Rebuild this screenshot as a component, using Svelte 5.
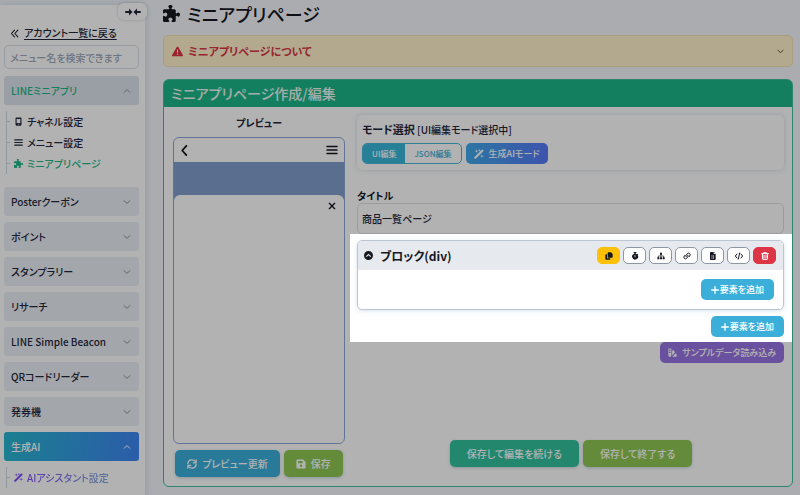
<script>
  let title = $state("商品一覧ページ");
  let keyword = $state("");
  let mode = $state("ui");

  let groups = $state([
    {
      label: "LINEミニアプリ",
      theme: "current",
      open: true,
      items: [
        { label: "チャネル設定", icon: "mobile" },
        { label: "メニュー設定", icon: "bars" },
        { label: "ミニアプリページ", icon: "puzzle", theme: "active" },
      ],
    },
    { label: "Posterクーポン" },
    { label: "ポイント" },
    { label: "スタンプラリー" },
    { label: "リサーチ" },
    { label: "LINE Simple Beacon" },
    { label: "QRコードリーダー" },
    { label: "発券機" },
    {
      label: "生成AI",
      theme: "ai",
      open: true,
      items: [{ label: "AIアシスタント設定", icon: "wand", theme: "ai-item" }],
    },
  ]);

  const tools = [
    { icon: "copy", label: "複製", theme: "warning" },
    { icon: "stopwatch", label: "タイマー" },
    { icon: "sitemap", label: "階層" },
    { icon: "link", label: "リンク" },
    { icon: "file", label: "ファイル" },
    { icon: "code", label: "コード" },
    { icon: "trash", label: "削除", theme: "danger" },
  ];

  // "line" is drawn as a stroke, "fill" as a solid shape
  const icons = {
    puzzle: {
      box: 512,
      fill: "M192 104.800c0-9.200-5.800-17.300-13.200-22.800C167.200 73.300 160 61.300 160 48c0-26.500 28.700-48 64-48s64 21.500 64 48c0 13.300-7.200 25.300-18.800 34c-7.400 5.500-13.200 13.600-13.200 22.800c0 12.800 10.400 23.200 23.200 23.200H336c26.500 0 48 21.500 48 48v56.800c0 12.800 10.400 23.200 23.200 23.200c9.200 0 17.300-5.800 22.800-13.200c8.700-11.600 20.700-18.800 34-18.800c26.500 0 48 28.700 48 64s-21.500 64-48 64c-13.300 0-25.300-7.200-34-18.800c-5.500-7.400-13.600-13.200-22.800-13.200c-12.800 0-23.200 10.400-23.200 23.200V464c0 26.500-21.500 48-48 48H279.200c-12.800 0-23.200-10.400-23.200-23.200c0-9.200 5.800-17.300 13.200-22.800c11.600-8.700 18.800-20.700 18.800-34c0-26.500-28.700-48-64-48s-64 21.500-64 48c0 13.300 7.200 25.300 18.800 34c7.400 5.500 13.200 13.600 13.200 22.800c0 12.800-10.400 23.200-23.200 23.200H48c-26.500 0-48-21.500-48-48V343.200C0 330.400 10.400 320 23.200 320c9.200 0 17.300 5.800 22.800 13.200C54.700 344.800 66.700 352 80 352c26.500 0 48-28.700 48-64s-21.500-64-48-64c-13.300 0-25.300 7.200-34 18.800C40.500 250.200 32.400 256 23.200 256C10.400 256 0 245.600 0 232.800V176c0-26.500 21.500-48 48-48H168.800c12.800 0 23.200-10.400 23.200-23.200z",
    },
    warning: {
      box: 512,
      fill: "M256 32c14.200 0 27.300 7.500 34.500 19.800l216 368c7.300 12.400 7.300 27.700 .2 40.100S486.300 480 472 480H40c-14.300 0-27.600-7.700-34.700-20.100s-7-27.800 .2-40.100l216-368C228.700 39.500 241.800 32 256 32zm0 128c-13.300 0-24 10.700-24 24V296c0 13.300 10.700 24 24 24s24-10.700 24-24V184c0-13.300-10.700-24-24-24zm32 224a32 32 0 1 0 -64 0 32 32 0 1 0 64 0z",
    },
    mobile: { box: 24, fill: "M7 1h10a3 3 0 0 1 3 3v16a3 3 0 0 1-3 3H7a3 3 0 0 1-3-3V4a3 3 0 0 1 3-3zm0 4v11h10V5zm3 13v2h4v-2z" },
    bars: { box: 24, line: "M2 5h20M2 12h20M2 19h20", width: 3 },
    wand: {
      box: 24,
      line: "M3 21L20 4",
      width: 5,
      fill: "M6 0l1 4 4 1-4 1-1 4-1-4-4-1 4-1zM13 0l1 2 2 1-2 1-1 2-1-2-2-1 2-1zM19 12l1 4 4 1-4 1-1 4-1-4-4-1 4-1z",
    },
    back: { box: 24, line: "M12 3l-8 9 8 9M21 3l-8 9 8 9", width: 3 },
    collapse: { box: 32, line: "M2 16h8M30 16h-8", width: 4, fill: "M8 9l7 7-7 7zM24 9l-7 7 7 7z" },
    down: { box: 24, line: "M3 8l9 8 9-8", width: 3 },
    up: { box: 24, line: "M3 16l9-8 9 8", width: 3 },
    left: { box: 24, line: "M16 2L7 12l9 10", width: 4 },
    close: { box: 24, line: "M4 4l16 16M20 4L4 20", width: 4 },
    plus: { box: 24, line: "M12 2v20M2 12h20", width: 4 },
    circleUp: { box: 24, fill: "M12 0a12 12 0 1 1 0 24a12 12 0 0 1 0-24zM5 14l2 2 5-5 5 5 2-2-7-7z" },
    copy: { box: 24, fill: "M10 1h8l5 5v9a2 2 0 0 1-2 2H10a2 2 0 0 1-2-2V3a2 2 0 0 1 2-2zM3 7h3v10a2 2 0 0 0 2 2h8v2a2 2 0 0 1-2 2H3a2 2 0 0 1-2-2V9a2 2 0 0 1 2-2z" },
    stopwatch: { box: 24, fill: "M8 0h8v3h-2v2a9 9 0 0 1 4 2l2-2 2 2-2 2a9 9 0 1 1-10-4V3H8zM11 9v7h2V9z" },
    sitemap: {
      box: 24,
      line: "M12 7v10M4 17v-5h16v5",
      width: 2,
      fill: "M9 2h6v6H9zM1 16h6v6H1zM9 16h6v6H9zM17 16h6v6h-6z",
    },
    link: { box: 24, line: "M10 15a5 5 0 0 1 0-7l3-3a5 5 0 0 1 7 0a5 5 0 0 1 0 7l-2 2M14 9a5 5 0 0 1 0 7l-3 3a5 5 0 0 1-7 0a5 5 0 0 1 0-7l2-2", width: 3 },
    file: { box: 24, fill: "M5 0h9v6h6v16a2 2 0 0 1-2 2H5a2 2 0 0 1-2-2V2a2 2 0 0 1 2-2zM16 0l4 4h-4zM8 10v4h2v-4zM13 10v4h2v-4zM8 16v4h2v-4zM13 16v4h2v-4z" },
    code: { box: 24, line: "M6 6l-5 6 5 6M18 6l5 6-5 6M14 3l-4 18", width: 3 },
    trash: { box: 24, line: "M2 5h20M8 5V2h8v3M4 5l1 17h14l1-17M9 10v8M15 10v8", width: 3 },
    refresh: { box: 24, line: "M2 11a10 10 0 0 1 18-5l2 2M22 2v7h-7M22 13a10 10 0 0 1-18 5l-2-2M2 22v-7h7", width: 3 },
    save: { box: 24, fill: "M4 1h13l6 6v13a3 3 0 0 1-3 3H4a3 3 0 0 1-3-3V4a3 3 0 0 1 3-3zM5 5v5h11V5zM12 13a3 3 0 1 0 0 6a3 3 0 0 0 0-6z" },
    swatch: { box: 24, fill: "M1 1h8v18a4 4 0 0 1-8 0zM3 4v3h4V4zM3 10v3h4v-3zM11 7l3-2 5 6-8 9zM19 15h4v8H12z" },
  };
</script>

{#snippet icon(name, size = 10)}
  {@const shape = icons[name]}
  <svg
    class="icon"
    width={size}
    height={size}
    viewBox="0 0 {shape.box} {shape.box}"
    aria-hidden="true">
    {#if shape.fill}
      <path d={shape.fill} fill="currentColor" fill-rule="evenodd" />
    {/if}
    {#if shape.line}
      <path
        d={shape.line}
        fill="none"
        stroke="currentColor"
        stroke-width={shape.width}
        stroke-linecap="round"
        stroke-linejoin="round" />
    {/if}
  </svg>
{/snippet}

<div class="page">
  <aside class="sidebar">
    <button class="sidebar__toggle" aria-label="メニューを閉じる">
      {@render icon("collapse", 16)}
    </button>
    <a class="sidebar__back" href="#/accounts">
      {@render icon("back", 9)}
      <span>アカウント一覧に戻る</span>
    </a>
    <input
      class="sidebar__search"
      type="text"
      aria-label="メニュー検索"
      placeholder="メニュー名を検索できます"
      bind:value={keyword} />

    <nav class="menu">
      {#each groups as group}
        <div>
          <button
            class="menu__head {group.theme ?? ''}"
            aria-expanded={!!group.open}
            onclick={() => (group.open = !group.open)}>
            {group.label}
            {@render icon(group.open ? "up" : "down", 8)}
          </button>
          {#if group.open && group.items}
            <ul class="menu__list">
              {#each group.items as item}
                <li>
                  <a class="menu__link {item.theme ?? ''}" href="#/menu">
                    {@render icon(item.icon, 9)}
                    <span>{item.label}</span>
                  </a>
                </li>
              {/each}
            </ul>
          {/if}
        </div>
      {/each}
    </nav>
  </aside>

  <main class="main">
    <h1>
      {@render icon("puzzle", 17)}
      ミニアプリページ
    </h1>

    <button class="notice" aria-expanded="false">
      {@render icon("warning", 11)}
      <span>ミニアプリページについて</span>
      {@render icon("down", 7)}
    </button>

    <section class="panel">
      <h2>ミニアプリページ作成/編集</h2>
      <div class="panel__body">
        <div class="preview">
          <h3>プレビュー</h3>
          <div class="phone">
            <div class="phone__bar">
              {@render icon("left", 11)}
              {@render icon("bars", 12)}
            </div>
            <div class="phone__view">
              <div class="phone__sheet">
                {@render icon("close", 8)}
              </div>
            </div>
          </div>
          <div class="actions preview__actions">
            <button class="btn btn--large info">
              {@render icon("refresh")}
              プレビュー更新
            </button>
            <button class="btn btn--large lime">
              {@render icon("save")}
              保存
            </button>
          </div>
        </div>

        <form class="editor" onsubmit={(e) => e.preventDefault()}>
          <div class="mode">
            <p><strong>モード選択</strong> [UI編集モード選択中]</p>
            <div class="actions">
              <div class="switch">
                <button type="button" class:on={mode === "ui"} onclick={() => (mode = "ui")}>
                  UI編集
                </button>
                <button type="button" class:on={mode === "json"} onclick={() => (mode = "json")}>
                  JSON編集
                </button>
              </div>
              <button type="button" class="btn gradient">
                {@render icon("wand")}
                生成AIモード
              </button>
            </div>
          </div>

          <div class="field">
            <label for="page-title">タイトル</label>
            <input id="page-title" type="text" bind:value={title} />
          </div>

          <!-- the tour step: everything around this box is dimmed -->
          <div class="spotlight">
            <div class="block">
              <div class="block__head">
                {@render icon("circleUp", 9)}
                <h4>ブロック(div)</h4>
                <div class="tools">
                  {#each tools as tool}
                    <button type="button" class="tool {tool.theme ?? ''}" aria-label={tool.label}>
                      {@render icon(tool.icon, 8)}
                    </button>
                  {/each}
                </div>
              </div>
              <div class="block__body">
                <button type="button" class="btn btn--add info">
                  {@render icon("plus", 8)}要素を追加
                </button>
              </div>
            </div>
            <button type="button" class="btn btn--add info">
              {@render icon("plus", 8)}要素を追加
            </button>
          </div>

          <button type="button" class="btn purple sample">
            {@render icon("swatch", 9)}
            サンプルデータ読み込み
          </button>

          <div class="actions submit">
            <button class="btn btn--large btn--wide green">保存して編集を続ける</button>
            <button class="btn btn--large btn--wide lime">保存して終了する</button>
          </div>
        </form>
      </div>
    </section>
  </main>
</div>

<style>
  :global(body) {
    background-color: #f4f7fc;
  }

  .page {
    display: flex;
    align-items: flex-start;
    min-height: 100vh;
    overflow: hidden;
    color: #23263b;
    font-family: "Noto Sans CJK JP", "Noto Sans", sans-serif;
    font-size: 10px;
    font-weight: 500;
    line-height: 16px;
    font-feature-settings: "palt";
  }

  .page * {
    box-sizing: border-box;
  }

  button,
  input {
    font: inherit;
    font-feature-settings: inherit;
    color: inherit;
    margin: 0;
  }

  button {
    display: flex;
    align-items: center;
    justify-content: center;
    border: 0;
    cursor: pointer;
    white-space: nowrap;
  }

  h1,
  h2,
  h3,
  h4,
  p,
  ul {
    margin: 0;
    padding: 0;
  }

  .icon {
    display: block;
    flex: none;
  }

  .sidebar {
    position: relative;
    flex: none;
    width: 145px;
    margin-top: 5px;
    padding: 20px 6px 5px 4px;
    background-color: white;
    border-radius: 0 6px 6px 0;
    box-shadow: 0 0 8px rgba(120, 160, 190, 0.3);
  }

  .sidebar__toggle {
    position: absolute;
    top: -2px;
    right: -2px;
    width: 29px;
    height: 17px;
    padding: 0;
    background-color: white;
    border-radius: 6px;
    box-shadow: 0 0 3px rgba(60, 80, 110, 0.3);
  }

  .sidebar__back {
    display: flex;
    align-items: center;
    gap: 5px;
    padding-left: 6px;
    color: inherit;
    text-decoration: none;
  }

  .sidebar__back span {
    text-decoration: underline;
    text-underline-offset: 2px;
  }

  .sidebar__search {
    display: block;
    width: 100%;
    height: 24px;
    margin: 4px 0 7px;
    padding: 0 5px;
    background-color: white;
    border: 1px solid #d9e0e8;
    border-radius: 5px;
  }

  .sidebar__search::placeholder {
    color: #a0a8b8;
  }

  .menu {
    display: flex;
    flex-direction: column;
    gap: 6px;
  }

  .menu__head {
    justify-content: space-between;
    width: 100%;
    height: 29px;
    padding: 0 8px 0 7px;
    background-color: #eaeff5;
    border-radius: 3px;
  }

  .menu__head .icon {
    color: #8a93a5;
  }

  .menu__head.current {
    color: #1db788;
    background-color: #dde4ec;
  }

  .menu__head.ai {
    color: white;
    background: linear-gradient(100deg, #28b7cf, #3f85f3);
  }

  .menu__head.ai .icon {
    color: white;
  }

  .menu__list {
    margin: 6px 0 7px 2px;
    list-style: none;
    border-left: 1px solid #cfd8e2;
  }

  .menu__link {
    display: flex;
    align-items: center;
    gap: 4px;
    height: 21px;
    color: inherit;
    text-decoration: none;
  }

  .menu__link::before {
    content: "";
    width: 3px;
    height: 1px;
    background-color: #cfd8e2;
  }

  .menu__link.active {
    color: #1db788;
  }

  .menu__link.ai-item {
    color: #7d45ff;
  }

  .menu__link.ai-item span {
    color: transparent;
    background: linear-gradient(90deg, #8350f5, #80a8d8);
    background-clip: text;
  }

  .main {
    flex: 1;
    min-width: 0;
    padding: 0 7px 8px 18px;
  }

  h1 {
    display: flex;
    align-items: center;
    gap: 7px;
    height: 27px;
    font-size: 18px;
    font-weight: 500;
    color: #16181f;
  }

  .notice {
    width: 100%;
    height: 32px;
    margin: 8px 0 12px;
    padding: 0 8px;
    gap: 5px;
    background-color: #fff3cd;
    border: 1px solid #f3e3b4;
    border-radius: 5px;
    color: #4a4433;
  }

  .notice span {
    flex: 1;
    text-align: left;
    font-size: 11px;
    font-weight: 700;
    color: #dc3545;
  }

  .notice .icon:first-child {
    color: #dc3545;
  }

  .panel {
    background-color: white;
    border: 1px solid #3fbf9b;
    border-radius: 6px;
  }

  h2 {
    padding: 0 7px;
    background-color: #1db788;
    border-radius: 4px 4px 0 0;
    color: #eef7f4;
    font-size: 14px;
    font-weight: 500;
    line-height: 27px;
  }

  .panel__body {
    display: grid;
    grid-template-columns: minmax(0, 8fr) minmax(0, 19fr);
  }

  .preview {
    display: flex;
    flex-direction: column;
    padding: 8px 5px 9px 9px;
  }

  h3 {
    margin-bottom: 6px;
    text-align: center;
    font-size: 10px;
    font-weight: 700;
  }

  .phone {
    display: flex;
    flex-direction: column;
    flex: 1;
    min-height: 307px;
    border: 1px solid #8fa8d8;
    border-radius: 6px;
    color: #16181f;
  }

  .phone__bar {
    display: flex;
    align-items: center;
    justify-content: space-between;
    height: 24px;
    padding: 0 6px 0 5px;
  }

  .phone__view {
    display: flex;
    flex: 1;
    padding-top: 33px;
    background-color: #829fce;
    border-radius: 0 0 5px 5px;
  }

  .phone__sheet {
    display: flex;
    justify-content: flex-end;
    flex: 1;
    padding: 7px 8px;
    background-color: white;
    border-radius: 6px 6px 5px 5px;
  }

  .actions {
    display: flex;
    gap: 4px;
  }

  .preview__actions {
    justify-content: center;
    margin-top: 6px;
  }

  .btn {
    gap: 5px;
    height: 21px;
    padding: 0 8px;
    border-radius: 5px;
    color: white;
    font-size: 9px;
  }

  .btn--large {
    height: 27px;
    padding: 0 12px;
    font-size: 10px;
    box-shadow: 0 1px 3px rgba(60, 120, 140, 0.3);
  }

  .btn--wide {
    padding: 0 17px;
  }

  .btn--add {
    gap: 1px;
    padding: 0 10px;
  }

  .info {
    background-color: #3bafda;
  }

  .lime {
    background-color: #8fc853;
  }

  .green {
    background-color: #33c29e;
  }

  .purple {
    background-color: #9975e5;
  }

  .gradient {
    background: linear-gradient(90deg, #3fa9ea, #5878f8);
  }

  .editor {
    display: flex;
    flex-direction: column;
    padding: 8px 0 19px;
  }

  .mode {
    margin: 0 8px 0 7px;
    padding: 6px 5px;
    border-radius: 5px;
    box-shadow: 0 0 5px rgba(120, 140, 170, 0.3);
  }

  .mode p {
    margin-bottom: 5px;
  }

  .mode strong {
    font-size: 11px;
    font-weight: 700;
  }

  .switch {
    display: flex;
    border: 1px solid #45b9da;
    border-radius: 5px;
    overflow: hidden;
  }

  .switch button {
    height: 19px;
    padding: 0 9px;
    background-color: transparent;
    color: #3bafda;
    font-size: 8px;
  }

  .switch button.on {
    background-color: #38b7da;
    color: white;
  }

  .field {
    display: flex;
    flex-direction: column;
    margin: 18px 8px 0 7px;
  }

  .field label {
    line-height: 15px;
    font-weight: 700;
    color: #16181f;
  }

  .field input {
    height: 31px;
    padding: 0 4px;
    background-color: white;
    border: 1px solid #dde0e4;
    border-radius: 5px;
  }

  .spotlight {
    position: relative;
    z-index: 10;
    display: flex;
    flex-direction: column;
    align-items: flex-end;
    gap: 6px;
    padding: 6px 8px 5px 7px;
    background-color: white;
    box-shadow: 0 0 0 200vmax rgba(0, 0, 0, 0.3);
  }

  .block {
    width: 100%;
    border: 1px solid #bcc5d2;
    border-radius: 5px;
    box-shadow: 0 1px 4px rgba(120, 160, 200, 0.3);
  }

  .block__head {
    display: flex;
    align-items: center;
    gap: 7px;
    height: 29px;
    padding: 0 7px 0 6px;
    background-color: #e6e9ee;
    border-radius: 4px 4px 0 0;
    color: #16181f;
  }

  h4 {
    flex: 1;
    font-size: 12px;
    font-weight: 700;
  }

  .tools {
    display: flex;
    gap: 3px;
  }

  .tool {
    width: 23px;
    height: 17px;
    padding: 0;
    background-color: white;
    border: 1px solid #8e96a3;
    border-radius: 5px;
  }

  .tool.warning {
    background-color: #ffc107;
    border-color: #ffc107;
  }

  .tool.danger {
    background-color: #dc3545;
    border-color: #dc3545;
    color: white;
  }

  .block__body {
    display: flex;
    justify-content: flex-end;
    padding: 9px;
  }

  .sample {
    align-self: flex-end;
    margin-right: 8px;
  }

  .submit {
    justify-content: center;
    margin-top: auto;
  }
</style>
